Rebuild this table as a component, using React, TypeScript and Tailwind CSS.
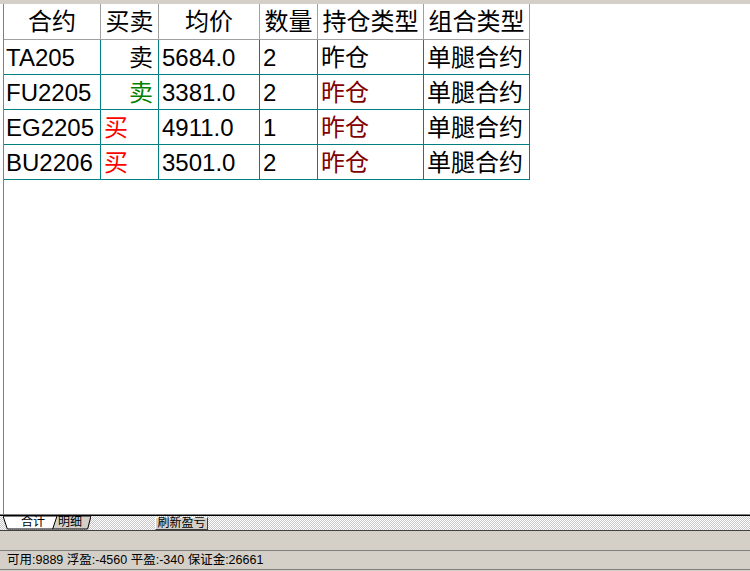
import React from "react";

type Row = {
  code: string;
  side: string;
  sideClass: string;
  price: string;
  qty: string;
  pos: string;
  posClass: string;
  combo: string;
};

const rows: Row[] = [
  { code: "TA205", side: "卖", sideClass: "text-black justify-end pr-[5px]", price: "5684.0", qty: "2", pos: "昨仓", posClass: "text-black", combo: "单腿合约" },
  { code: "FU2205", side: "卖", sideClass: "text-[#008000] justify-end pr-[5px]", price: "3381.0", qty: "2", pos: "昨仓", posClass: "text-[#800000]", combo: "单腿合约" },
  { code: "EG2205", side: "买", sideClass: "text-[#ff0000] justify-start pl-[3px]", price: "4911.0", qty: "1", pos: "昨仓", posClass: "text-[#800000]", combo: "单腿合约" },
  { code: "BU2206", side: "买", sideClass: "text-[#ff0000] justify-start pl-[3px]", price: "3501.0", qty: "2", pos: "昨仓", posClass: "text-[#800000]", combo: "单腿合约" },
];

const headers = [
  { label: "合约", w: "w-[97px]" },
  { label: "买卖", w: "w-[58px]" },
  { label: "均价", w: "w-[101px]" },
  { label: "数量", w: "w-[58px]" },
  { label: "持仓类型", w: "w-[106px]" },
  { label: "组合类型", w: "w-[106px]" },
];

function Tab({ label, active, className }: { label: string; active?: boolean; className?: string }) {
  return (
    <div className={`relative h-[14px] flex items-start justify-center ${className ?? ""}`}>
      <svg className="absolute inset-0" width="100%" height="14" preserveAspectRatio="none" viewBox="0 0 50 14">
        <polygon
          points="0,0 4,13 46,13 50,0"
          fill={active ? "#ffffff" : "#d4d0c8"}
          stroke="#000"
          strokeWidth="1"
          vectorEffect="non-scaling-stroke"
        />
      </svg>
      <span className="relative text-[12px] leading-[12px] text-black whitespace-nowrap">{label}</span>
    </div>
  );
}

export default function App() {
  return (
    <div className="w-[750px] h-[571px] flex flex-col bg-white overflow-hidden font-['Liberation_Sans','Noto_Sans_CJK_SC',sans-serif]">
      <div className="h-[4px] bg-[#d4d0c8]" />

      {/* Positions grid */}
      <div className="h-[510px] ml-[3px] border-l border-[#808080] bg-white">
        <div className="flex h-[36px] text-[24px] text-black">
          {headers.map((h) => (
            <div
              key={h.label}
              className={`${h.w} flex items-center justify-center pt-[1px] border-r border-b border-[#a0a0a0] whitespace-nowrap`}
            >
              {h.label}
            </div>
          ))}
        </div>
        {rows.map((r) => (
          <div key={r.code} className="flex h-[35px] text-[24px] text-black">
            <div className="w-[97px] flex items-center pl-[2px] pt-[1px] border-r border-b border-[#008080]">{r.code}</div>
            <div className={`w-[58px] flex items-center pt-[1px] border-r border-b border-[#008080] ${r.sideClass}`}>{r.side}</div>
            <div className="w-[101px] flex items-center pl-[3px] pt-[1px] border-r border-b border-[#008080]">{r.price}</div>
            <div className="w-[58px] flex items-center pl-[3px] pt-[1px] border-r border-b border-[#008080]">{r.qty}</div>
            <div className={`w-[106px] flex items-center pl-[3px] pt-[1px] border-r border-b border-[#008080] ${r.posClass}`}>{r.pos}</div>
            <div className="w-[106px] flex items-center pl-[3px] pt-[1px] border-r border-b border-[#008080] whitespace-nowrap">{r.combo}</div>
          </div>
        ))}
      </div>

      {/* Tab strip */}
      <div className="border-t border-[#808080]" />
      <div className="h-[16px] border-t border-black border-b border-b-[#404040] bg-[repeating-conic-gradient(#c8c8c8_0%_25%,#ffffff_0%_50%)] bg-size-[2px_2px] flex items-start">
        <div className="flex ml-[3px]">
          <Tab label="合计" active className="w-[54px] pl-[6px] z-10" />
          <Tab label="明细" className="w-[42px] -ml-[8px]" />
        </div>
        <div className="ml-[64px] mt-[1px] h-[13px] w-[53px] bg-[#d4d0c8] border-t border-l border-t-white border-l-white border-b border-r border-b-[#404040] border-r-[#404040] flex items-start justify-center text-[12px] leading-[11px] text-black whitespace-nowrap">
          刷新盈亏
        </div>
      </div>

      <div className="h-[20px] bg-[#d4d0c8] border-b border-[#808080]" />
      <div className="h-[19px] bg-[#d4d0c8] border-b border-[#808080] flex items-center pl-[7px] text-[12.5px] text-black whitespace-nowrap">
        可用:9889 浮盈:-4560 平盈:-340 保证金:26661
      </div>
      <div className="flex-1 bg-[#d4d0c8]" />
    </div>
  );
}
